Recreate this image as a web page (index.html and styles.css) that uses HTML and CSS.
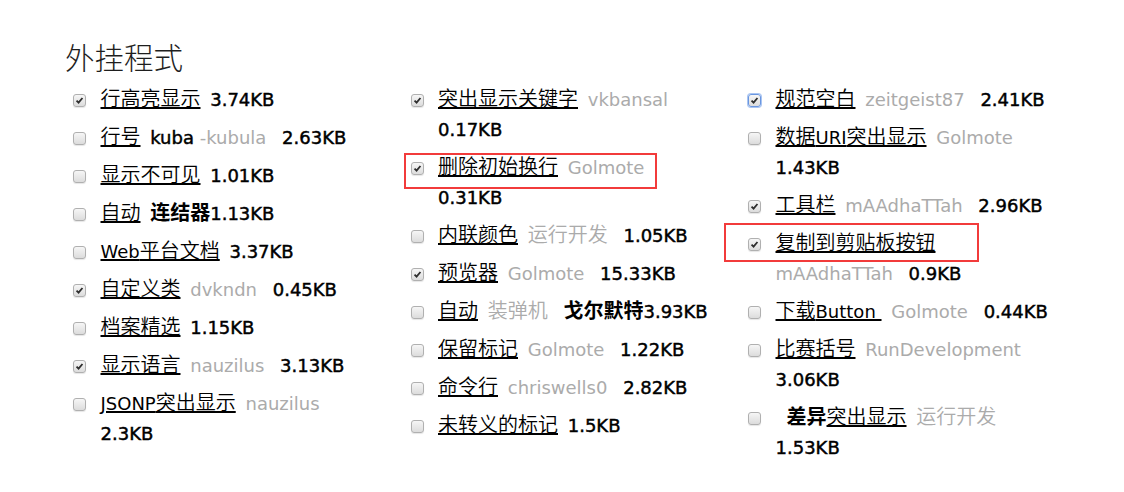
FILE: index.html
```html
<!DOCTYPE html>
<html lang="zh-CN">
<head>
<meta charset="utf-8">
<title>外挂程式</title>
<link rel="stylesheet" href="styles.css">
</head>
<body>
<section class="plugins">
  <h2 class="title">外挂程式</h2>
  <div class="cols">
    <ul class="col">
      <li class="item"><span class="cb"><svg viewBox="0 0 13 13"><path d="M3 6.6 L5.4 9 L10 3.6"/></svg></span><div class="txt"><a class="name" href="#">行高亮显示</a> <strong class="size">3.74KB</strong></div></li>
      <li class="item"><span class="cb"></span><div class="txt"><a class="name" href="#">行号</a> <b class="own lat">kuba</b> <span class="author">-kubula</span> <strong class="size">2.63KB</strong></div></li>
      <li class="item"><span class="cb"></span><div class="txt"><a class="name" href="#">显示不可见</a> <strong class="size">1.01KB</strong></div></li>
      <li class="item"><span class="cb"></span><div class="txt"><a class="name" href="#">自动</a> <b class="own">连结器</b><strong class="size">1.13KB</strong></div></li>
      <li class="item"><span class="cb"></span><div class="txt"><a class="name" href="#"><span class="lat">Web</span>平台文档</a> <strong class="size">3.37KB</strong></div></li>
      <li class="item"><span class="cb"><svg viewBox="0 0 13 13"><path d="M3 6.6 L5.4 9 L10 3.6"/></svg></span><div class="txt"><a class="name" href="#">自定义类</a> <span class="author">dvkndn</span> <strong class="size">0.45KB</strong></div></li>
      <li class="item"><span class="cb"></span><div class="txt"><a class="name" href="#">档案精选</a> <strong class="size">1.15KB</strong></div></li>
      <li class="item"><span class="cb"><svg viewBox="0 0 13 13"><path d="M3 6.6 L5.4 9 L10 3.6"/></svg></span><div class="txt"><a class="name" href="#">显示语言</a> <span class="author">nauzilus</span> <strong class="size">3.13KB</strong></div></li>
      <li class="item"><span class="cb"></span><div class="txt"><a class="name" href="#"><span class="lat">JSONP</span>突出显示</a> <span class="author">nauzilus</span> <strong class="size">2.3KB</strong></div></li>
    </ul>
    <ul class="col">
      <li class="item"><span class="cb"><svg viewBox="0 0 13 13"><path d="M3 6.6 L5.4 9 L10 3.6"/></svg></span><div class="txt"><a class="name" href="#">突出显示关键字</a> <span class="author">vkbansal</span> <strong class="size">0.17KB</strong></div></li>
      <li class="item"><span class="cb"><svg viewBox="0 0 13 13"><path d="M3 6.6 L5.4 9 L10 3.6"/></svg></span><div class="txt"><a class="name" href="#">删除初始换行</a> <span class="author">Golmote</span> <strong class="size">0.31KB</strong></div></li>
      <li class="item"><span class="cb"></span><div class="txt"><a class="name" href="#">内联颜色</a> <span class="author zh">运行开发</span> <strong class="size">1.05KB</strong></div></li>
      <li class="item"><span class="cb"><svg viewBox="0 0 13 13"><path d="M3 6.6 L5.4 9 L10 3.6"/></svg></span><div class="txt"><a class="name" href="#">预览器</a> <span class="author">Golmote</span> <strong class="size">15.33KB</strong></div></li>
      <li class="item"><span class="cb"></span><div class="txt"><a class="name" href="#">自动</a> <span class="author zh">装弹机</span> <b class="own">戈尔默特</b><strong class="size">3.93KB</strong></div></li>
      <li class="item"><span class="cb"></span><div class="txt"><a class="name" href="#">保留标记</a> <span class="author">Golmote</span> <strong class="size">1.22KB</strong></div></li>
      <li class="item"><span class="cb"></span><div class="txt"><a class="name" href="#">命令行</a> <span class="author">chriswells0</span> <strong class="size">2.82KB</strong></div></li>
      <li class="item"><span class="cb"></span><div class="txt"><a class="name" href="#">未转义的标记</a> <strong class="size">1.5KB</strong></div></li>
    </ul>
    <ul class="col">
      <li class="item"><span class="cb focus"><svg viewBox="0 0 13 13"><path d="M3 6.6 L5.4 9 L10 3.6"/></svg></span><div class="txt"><a class="name" href="#">规范空白</a> <span class="author">zeitgeist87</span> <strong class="size">2.41KB</strong></div></li>
      <li class="item"><span class="cb"></span><div class="txt"><a class="name" href="#">数据<span class="lat">URI</span>突出显示</a> <span class="author">Golmote</span> <strong class="size">1.43KB</strong></div></li>
      <li class="item"><span class="cb"><svg viewBox="0 0 13 13"><path d="M3 6.6 L5.4 9 L10 3.6"/></svg></span><div class="txt"><a class="name" href="#">工具栏</a> <span class="author">mAAdhaTTah</span> <strong class="size">2.96KB</strong></div></li>
      <li class="item"><span class="cb"><svg viewBox="0 0 13 13"><path d="M3 6.6 L5.4 9 L10 3.6"/></svg></span><div class="txt"><a class="name" href="#">复制到剪贴板按钮</a> <span class="author">mAAdhaTTah</span> <strong class="size">0.9KB</strong></div></li>
      <li class="item"><span class="cb"></span><div class="txt"><a class="name" href="#">下载<span class="lat">Button&nbsp;</span></a> <span class="author">Golmote</span> <strong class="size">0.44KB</strong></div></li>
      <li class="item"><span class="cb"></span><div class="txt"><a class="name" href="#">比赛括号</a> <span class="author">RunDevelopment</span> <strong class="size">3.06KB</strong></div></li>
      <li class="item"><span class="cb"></span><div class="txt"><b class="own lead">差异</b><a class="name" href="#">突出显示</a> <span class="author zh">运行开发</span> <strong class="size">1.53KB</strong></div></li>
    </ul>
  </div>
  <div class="mark mark-a"></div>
  <div class="mark mark-b"></div>
</section>
</body>
</html>
```

FILE: styles.css
```css
* { box-sizing: border-box; }

body {
  margin: 0;
  background: #fff;
  color: #000;
  font-family: "DejaVu Sans", "Noto Sans CJK SC", sans-serif;
  font-size: 18px;
}

.plugins {
  position: relative;
  padding: 36px 0 0 65px;
}

.title {
  margin: 0 0 9px;
  font-family: "Noto Sans CJK SC", sans-serif;
  font-weight: 300;
  font-size: 29.5px;
  line-height: 40px;
  color: #1e1e1e;
}

.cols {
  display: grid;
  grid-template-columns: repeat(3, 337.5px);
  padding-left: 8px;
}

.col {
  list-style: none;
  margin: 0;
  padding: 0 32px 0 0;
}

.item {
  display: flex;
  align-items: flex-start;
  margin-bottom: 8px;
}

.cb {
  flex: none;
  width: 13px;
  height: 13px;
  margin: 9px 14.5px 0 0;
  border: 1px solid #b0b0b0;
  border-radius: 3px;
  background: linear-gradient(#f6f6f6, #dcdcdc);
  box-shadow: 0 1px 1px rgba(0, 0, 0, 0.1);
}

.cb svg {
  display: block;
  width: 11px;
  height: 11px;
  fill: none;
  stroke: #2e2e2e;
  stroke-width: 2.1;
}

.cb.focus {
  border-color: #6a96e0;
  box-shadow: 0 0 0 1px #a9c5f2;
}

.txt {
  flex: 1;
  min-width: 0;
  line-height: 30px;
}

.txt > * {
  line-height: 20px;
}

.name {
  font-size: 20px;
  font-weight: 350;
  color: #000;
  text-decoration: underline;
  text-decoration-thickness: 2px;
  text-underline-offset: 1px;
  margin-right: 4px;
}

.lat {
  font-size: 18px;
  font-weight: 400;
}

.author {
  color: #ababab;
  margin-right: 10px;
}

.author.zh {
  font-size: 20px;
  font-weight: 350;
}

.own {
  font-size: 20px;
  font-weight: 700;
}

.own.lat {
  font-size: 18px;
  font-weight: 400;
  -webkit-text-stroke: 0.45px #000;
}

.own.lead {
  margin-left: 11px;
}

.size {
  font-weight: 400;
  -webkit-text-stroke: 0.45px #000;
}

.mark {
  position: absolute;
  border: 2px solid #f23b3b;
}

.mark-a {
  left: 404px;
  top: 153px;
  width: 253px;
  height: 36px;
}

.mark-b {
  left: 724px;
  top: 223px;
  width: 255px;
  height: 39px;
}
```
